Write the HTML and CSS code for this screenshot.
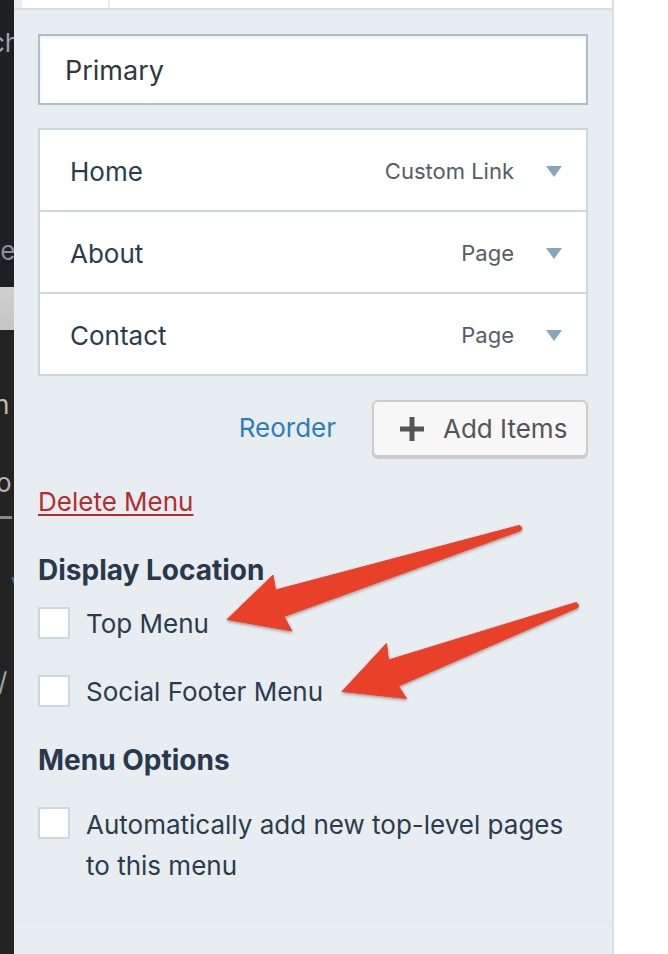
FILE: index.html
```html
<!DOCTYPE html>
<html lang="en">
<head>
<meta charset="utf-8">
<title>Menu</title>
<link rel="stylesheet" href="styles.css">
</head>
<body>
<div class="app">
  <aside class="strip">
    <div class="strip-top">
      <span class="frag f-ch">ch</span>
      <span class="frag f-te">te</span>
    </div>
    <div class="strip-bar"></div>
    <div class="strip-bottom">
      <span class="frag f-h">h</span>
      <span class="frag f-o">o</span>
      <span class="strip-line"></span>
      <span class="frag f-v">v</span>
      <span class="frag f-slash">/</span>
    </div>
  </aside>

  <main class="panel">
    <div class="tabs">
      <div class="tab tab-a"></div>
      <div class="tab tab-b"></div>
    </div>

    <div class="content">
      <div class="name-field">Primary</div>

      <ul class="items">
        <li class="item"><span class="item-title">Home</span><span class="item-type">Custom Link</span><span class="caret"></span></li>
        <li class="item"><span class="item-title">About</span><span class="item-type">Page</span><span class="caret"></span></li>
        <li class="item"><span class="item-title">Contact</span><span class="item-type">Page</span><span class="caret"></span></li>
      </ul>

      <div class="actions">
        <a class="reorder">Reorder</a>
        <button class="add-btn" type="button">
          <svg class="plus" width="26" height="26" viewBox="0 0 26 26"><rect x="10.5" y="1" width="5" height="24" fill="#555"/><rect x="1" y="10.5" width="24" height="5" fill="#555"/></svg>
          <span>Add Items</span>
        </button>
      </div>

      <a class="delete">Delete Menu</a>

      <h3 class="section-title">Display Location</h3>
      <label class="check"><span class="box"></span><span class="check-text">Top Menu</span></label>
      <label class="check check-2"><span class="box"></span><span class="check-text">Social Footer Menu</span></label>

      <h3 class="section-title options-title">Menu Options</h3>
      <label class="check check-3"><span class="box"></span><span class="check-text">Automatically add new top-level pages to this menu</span></label>
    </div>

    <div class="footer-band"></div>

    <svg class="arrows" width="598" height="954" viewBox="14 0 598 954">
      <defs>
        <filter id="sh" x="-10%" y="-10%" width="120%" height="130%">
          <feDropShadow dx="0" dy="1.5" stdDeviation="1.5" flood-color="#000" flood-opacity="0.35"/>
        </filter>
      </defs>
      <path filter="url(#sh)" fill="#e9412a" stroke="#e9412a" stroke-width="1" stroke-linejoin="round"
        d="M519 525.5 Q523.5 527 521 530.5 L284 616.5 L292 631 L227 619.5 L273 575 L275.5 590 Z"/>
      <path filter="url(#sh)" fill="#e9412a" stroke="#e9412a" stroke-width="1" stroke-linejoin="round"
        d="M576 602.5 Q580 604.5 578 607.5 L398.5 686 L406.5 698.5 L342 691.5 L386.5 643.5 L388.5 660 Z"/>
    </svg>
  </main>

  <div class="right"></div>
</div>
</body>
</html>
```

FILE: styles.css
```css
* { box-sizing: border-box; }

html, body {
  margin: 0;
  padding: 0;
  background: #ffffff;
}

body {
  font-family: Inter, "Noto Sans", "Liberation Sans", sans-serif;
  color: #2a3c4d;
}

.app {
  display: flex;
  width: 668px;
  height: 954px;
  overflow: hidden;
}

/* left dark strip */
.strip {
  width: 14px;
  flex: 0 0 14px;
  display: flex;
  flex-direction: column;
  overflow: hidden;
}

.strip-top {
  height: 287px;
  background: #1d1f22;
  display: flex;
  flex-direction: column;
}

.strip-bar {
  height: 43px;
  background: linear-gradient(#d0d0d0, #c4c4c4);
}

.strip-bottom {
  flex: 1;
  background: #232323;
  display: flex;
  flex-direction: column;
}

.frag {
  font-size: 26px;
  line-height: 30px;
  color: #9ea3a8;
  white-space: nowrap;
}

.f-ch { margin-top: 28px; margin-left: -10px; }
.f-te { margin-top: 178px; margin-left: -8px; color: #8d9096; }
.f-h { margin-top: 60px; margin-left: -6px; color: #c9bca4; }
.f-o { margin-top: 48px; margin-left: -4px; color: #b3b3b3; }
.strip-line { display: block; height: 3px; width: 12px; background: #8a8a8a; margin-top: 18px; }
.f-v { margin-top: 46px; margin-left: 11px; color: #4f7fa8; font-size: 16px; }
.f-slash { margin-top: 72px; margin-left: -2px; color: #9ea3a8; }

/* main panel */
.panel {
  position: relative;
  width: 600px;
  flex: 0 0 600px;
  background: #e8edf1;
  border-right: 2px solid #d8e0e7;
  display: flex;
  flex-direction: column;
}

.tabs {
  display: flex;
  gap: 2px;
  height: 10px;
  padding-left: 8px;
  border-bottom: 2px solid #d6dfe6;
  background: #e8edf1;
}

.tab {
  background: #ffffff;
  height: 8px;
}

.tab-a { width: 86px; }
.tab-b { flex: 1; }

.content {
  padding: 24px 24px 0 24px;
  display: flex;
  flex-direction: column;
}

.name-field {
  height: 71px;
  border: 2px solid #a9bfd1;
  background: #ffffff;
  box-shadow: inset 0 2px 3px rgba(0, 0, 0, 0.06);
  padding-left: 25px;
  font-size: 27px;
  line-height: 69px;
  color: #32373c;
}

.items {
  list-style: none;
  margin: 23px 0 0 0;
  padding: 0;
  border: 2px solid #c9d8e3;
  background: #ffffff;
}

.item {
  height: 82px;
  display: flex;
  align-items: center;
  padding: 2px 24px 0 30px;
  border-top: 2px solid #c9d8e3;
}

.item:first-child {
  height: 80px;
  border-top: 0;
}

.item-title {
  font-size: 26px;
  color: #2a3c4d;
  flex: 1;
}

.item-type {
  font-size: 22px;
  color: #555d66;
  margin-right: 32px;
}

.caret {
  width: 0;
  height: 0;
  border-left: 8px solid transparent;
  border-right: 8px solid transparent;
  border-top: 11px solid #87a6bc;
}

.actions {
  display: flex;
  justify-content: flex-end;
  align-items: center;
  gap: 36px;
  margin-top: 24px;
}

.reorder {
  font-size: 26px;
  color: #2e7dbd;
  margin-top: -2px;
}

.add-btn {
  width: 216px;
  height: 57px;
  display: flex;
  align-items: center;
  gap: 18px;
  padding: 0 0 0 25px;
  background: #f7f7f7;
  border: 2px solid #cccccc;
  border-radius: 6px;
  box-shadow: 0 2px 0 #cccccc;
  font-family: inherit;
  font-size: 26px;
  color: #555555;
}

.plus { flex: 0 0 26px; }

.delete {
  align-self: flex-start;
  margin-top: 30px;
  font-size: 26px;
  line-height: 30px;
  color: #b32d2e;
  text-decoration: underline;
  text-underline-offset: 3px;
  text-decoration-thickness: 2px;
}

.section-title {
  margin: 37px 0 0 0;
  font-size: 28px;
  font-weight: 700;
  line-height: 32px;
  color: #27394a;
}

.options-title { margin-top: 32px; }

.check {
  display: flex;
  align-items: flex-start;
  gap: 16px;
  margin-top: 21px;
}

.check-2 { margin-top: 31px; }
.check-3 { margin-top: 31px; }

.box {
  flex: 0 0 32px;
  width: 32px;
  height: 32px;
  background: #ffffff;
  border: 2px solid #c9d8e3;
}

.check-text {
  font-size: 26px;
  line-height: 41px;
  margin-top: -4px;
  color: #2a3c4d;
  max-width: 490px;
}

.check-3 .check-text { margin-top: -3px; }

.footer-band {
  margin-top: auto;
  height: 34px;
  border-top: 1px solid #e3e8ec;
}

.arrows {
  position: absolute;
  left: 0;
  top: 0;
  pointer-events: none;
}

.right {
  flex: 1;
  background: #ffffff;
}
```
